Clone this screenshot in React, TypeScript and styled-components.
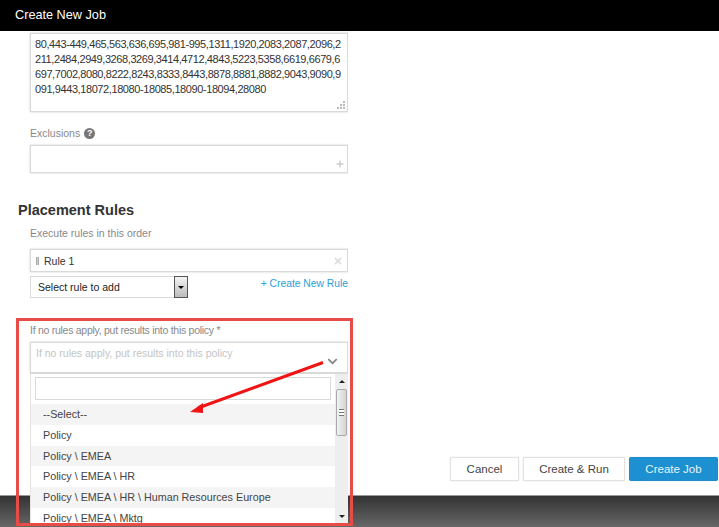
import React from 'react';
import styled, { createGlobalStyle } from 'styled-components';
import { FaChevronDown, FaPlus, FaTimes } from 'react-icons/fa';

const GlobalStyle = createGlobalStyle`
    html, body {
        margin: 0;
        padding: 0;
        background: #fff;
        font-family: "Liberation Sans", Arial, sans-serif;
    }
`;

const Page = styled.div`
    position: relative;
    width: 719px;
    height: 527px;
    overflow: hidden;
    display: flex;
    flex-direction: column;
`;

const Header = styled.div`
    flex: 0 0 31px;
    background: #000;
    color: #fff;
    font-size: 12.7px;
    line-height: 30px;
    padding-left: 15px;
`;

const Body = styled.div`
    flex: 0 0 465px;
    min-height: 0;
    background: #fff;
    display: flex;
    border-bottom: 1px solid #999;
    box-sizing: border-box;
`;

const Form = styled.div`
    position: relative;
    z-index: 1;
    width: 330px;
    margin-left: 18px;
    height: 493px;
    overflow: hidden;
    flex: none;
`;

const Group = styled.div`
    padding-left: 12px;
`;

const Box = styled.div<{ $height: number }>`
    position: relative;
    box-sizing: border-box;
    height: ${p => p.$height}px;
    border: 1px solid #d9d9d9;
    box-shadow: 0 0 2px #ccc;
    background: #fff;
`;

const PortsBox = styled(Box)`
    margin-top: 2px;
`;

const ExclusionsBox = styled(Box)`
    margin-top: 5px;
`;

const PortsText = styled.div`
    padding: 3px 4px 0 4px;
    font-size: 11px;
    line-height: 15px;
    color: #333;
    word-break: break-all;
    letter-spacing: -0.41px;
`;

const Grip = styled.svg`
    position: absolute;
    right: 1px;
    bottom: 1px;
`;

const Label = styled.div<{ $top: number; $tight?: boolean }>`
    margin-top: ${p => p.$top}px;
    font-size: 10.5px;
    line-height: 14px;
    color: #888;
    letter-spacing: ${p => (p.$tight ? '-0.27px' : '0')};
    display: flex;
    align-items: center;
    gap: 4px;
`;

const HelpIcon = styled.span`
    width: 11px;
    height: 11px;
    border-radius: 50%;
    background: #777;
    color: #fff;
    font-size: 9px;
    font-weight: bold;
    line-height: 11px;
    text-align: center;
`;

const CornerIcon = styled.span<{ $color: string; $bottom: number; $right: number }>`
    position: absolute;
    right: ${p => p.$right}px;
    bottom: ${p => p.$bottom}px;
    color: ${p => p.$color};
    display: flex;
`;

const Heading = styled.div`
    margin-top: 28px;
    font-size: 14.5px;
    font-weight: bold;
    line-height: 18px;
    color: #333;
`;

const RuleRow = styled(Box)`
    margin-top: 9px;
    display: flex;
    align-items: center;
    padding-left: 5px;
    gap: 5px;
    font-size: 10.5px;
    color: #333;
`;

const Handle = styled.span`
    width: 3px;
    height: 8px;
    border-left: 1px solid #aaa;
    border-right: 1px solid #aaa;
    box-sizing: border-box;
    background: #ccc;
`;

const RuleAddRow = styled.div`
    margin-top: 4px;
    display: flex;
    justify-content: space-between;
`;

const RuleSelect = styled.div`
    box-sizing: border-box;
    width: 158px;
    height: 22px;
    border: 1px solid #d9d9d9;
    display: flex;
    align-items: center;
    justify-content: space-between;
    padding-left: 7px;
    font-size: 10.5px;
    color: #222;
`;

const RuleSelectButton = styled.span`
    box-sizing: border-box;
    width: 14px;
    height: 22px;
    margin-right: -1px;
    border: 1px solid #555;
    background: linear-gradient(#f4f4f4, #bbb);
    display: flex;
    align-items: center;
    justify-content: center;

    &::before {
        content: "";
        border-left: 3px solid transparent;
        border-right: 3px solid transparent;
        border-top: 3px solid #000;
    }
`;

const CreateRuleLink = styled.a`
    margin-top: 1px;
    font-size: 10.3px;
    line-height: 13px;
    color: #2a9fd8;
`;

const PolicySelect = styled(Box)`
    margin-top: 5px;
    border-width: 1px 1px 2px;
    padding: 3px 0 0 5px;
    font-size: 10.5px;
    line-height: 14px;
    color: #c4c4c4;
`;

const Panel = styled.div`
    position: relative;
    box-sizing: border-box;
    height: 150px;
    background: #fff;
    border-left: 1px solid #e4e4e4;
    padding-right: 13px;
    overflow: hidden;
`;

const SearchInput = styled.div`
    box-sizing: border-box;
    height: 23px;
    margin: 3px 4px 4px;
    border: 1px solid #d9d9d9;
`;

const Option = styled.div<{ $shaded: boolean }>`
    height: 20.8px;
    padding-left: 12px;
    font-size: 10.75px;
    line-height: 20.8px;
    color: #444;
    white-space: nowrap;
    background: ${p => (p.$shaded ? '#f4f4f4' : '#fff')};
`;

const Scrollbar = styled.div`
    position: absolute;
    top: 0;
    right: 0;
    bottom: 0;
    width: 13px;
    background: #eee;
    display: flex;
    flex-direction: column;
    align-items: center;
    justify-content: space-between;
`;

const ScrollArrow = styled.span<{ $up: boolean }>`
    margin: 6px 0;
    border-left: 3px solid transparent;
    border-right: 3px solid transparent;
    ${p => (p.$up ? 'border-bottom: 3px solid #222;' : 'border-top: 3px solid #222;')}
`;

const ScrollThumb = styled.span`
    position: absolute;
    top: 15px;
    left: 1px;
    box-sizing: border-box;
    width: 11px;
    height: 47px;
    border: 1px solid #aaa;
    border-radius: 2px;
    background: linear-gradient(90deg, #f2f2f2, #d4d4d4);
    display: flex;
    align-items: center;
    justify-content: center;

    &::before {
        content: "";
        width: 5px;
        height: 5px;
        border-top: 1px solid #777;
        border-bottom: 1px solid #777;
        background: linear-gradient(#fff 40%, #777 40%, #777 60%, #fff 60%);
    }
`;

const Actions = styled.div`
    margin-left: auto;
    align-self: flex-end;
    display: flex;
    gap: 4px;
    padding: 0 1px 14px 0;
`;

const Button = styled.button<{ $primary?: boolean; $width: number }>`
    box-sizing: border-box;
    width: ${p => p.$width}px;
    height: 24px;
    padding: 0;
    border: 1px solid ${p => (p.$primary ? '#1b8ecb' : '#e2e2e2')};
    border-radius: 2px;
    background: ${p => (p.$primary ? '#1c90d0' : '#fff')};
    color: ${p => (p.$primary ? '#e8f4fb' : '#444')};
    font-family: inherit;
    font-size: 11.5px;
    box-shadow: 0 0 1px #bbb;
`;

const Footer = styled.div`
    flex: 1;
    background: linear-gradient(#333, #676767);
`;

const Highlight = styled.div`
    position: absolute;
    z-index: 2;
    left: 16px;
    top: 318px;
    width: 337px;
    height: 208px;
    box-sizing: border-box;
    border: 3px solid #e94b47;
    pointer-events: none;
`;

const Arrow = styled.svg`
    position: absolute;
    z-index: 3;
    left: 0;
    top: 0;
`;

const options = [
    '--Select--',
    'Policy',
    'Policy \\ EMEA',
    'Policy \\ EMEA \\ HR',
    'Policy \\ EMEA \\ HR \\ Human Resources Europe',
    'Policy \\ EMEA \\ Mktg',
];

const App: React.FC = () => {
    return (
        <Page>
            <GlobalStyle />
            <Header>Create New Job</Header>
            <Body>
                <Form>
                    <Group>
                        <PortsBox $height={79}>
                            <PortsText>
                                80,443-449,465,563,636,695,981-995,1311,1920,2083,2087,2096,2211,2484,2949,3268,3269,3414,4712,4843,5223,5358,6619,6679,6697,7002,8080,8222,8243,8333,8443,8878,8881,8882,9043,9090,9091,9443,18072,18080-18085,18090-18094,28080
                            </PortsText>
                            <Grip width="10" height="10" viewBox="0 0 10 10" fill="#bbb">
                                <rect x="7" y="1" width="2" height="2" />
                                <rect x="4" y="4" width="2" height="2" />
                                <rect x="7" y="4" width="2" height="2" />
                                <rect x="1" y="7" width="2" height="2" />
                                <rect x="4" y="7" width="2" height="2" />
                                <rect x="7" y="7" width="2" height="2" />
                            </Grip>
                        </PortsBox>
                        <Label $top={14}>
                            Exclusions <HelpIcon>?</HelpIcon>
                        </Label>
                        <ExclusionsBox $height={28}>
                            <CornerIcon $color="#ccc" $bottom={4} $right={3}>
                                <FaPlus size={8} />
                            </CornerIcon>
                        </ExclusionsBox>
                    </Group>
                    <Heading>Placement Rules</Heading>
                    <Group>
                        <Label $top={7}>Execute rules in this order</Label>
                        <RuleRow $height={23}>
                            <Handle />
                            Rule 1
                            <CornerIcon $color="#ddd" $bottom={5} $right={4}>
                                <FaTimes size={10} />
                            </CornerIcon>
                        </RuleRow>
                        <RuleAddRow>
                            <RuleSelect>
                                Select rule to add
                                <RuleSelectButton />
                            </RuleSelect>
                            <CreateRuleLink>+ Create New Rule</CreateRuleLink>
                        </RuleAddRow>
                        <Label $top={25} $tight>If no rules apply, put results into this policy *</Label>
                        <PolicySelect $height={32}>
                            If no rules apply, put results into this policy
                            <CornerIcon $color="#888" $bottom={5} $right={9}>
                                <FaChevronDown size={11} />
                            </CornerIcon>
                        </PolicySelect>
                        <Panel>
                            <SearchInput />
                            {options.map((option, i) => (
                                <Option key={option} $shaded={i % 2 === 0}>
                                    {option}
                                </Option>
                            ))}
                            <Scrollbar>
                                <ScrollArrow $up />
                                <ScrollThumb />
                                <ScrollArrow $up={false} />
                            </Scrollbar>
                        </Panel>
                    </Group>
                </Form>
                <Actions>
                    <Button $width={69}>Cancel</Button>
                    <Button $width={102}>Create &amp; Run</Button>
                    <Button $primary $width={89}>Create Job</Button>
                </Actions>
            </Body>
            <Footer />
            <Highlight />
            <Arrow width="719" height="527" viewBox="0 0 719 527">
                <line x1="323" y1="362.5" x2="198" y2="408" stroke="#f01414" strokeWidth="3" />
                <polygon points="190,412 203,403 203,413" fill="#f01414" />
            </Arrow>
        </Page>
    );
};

export default App;
